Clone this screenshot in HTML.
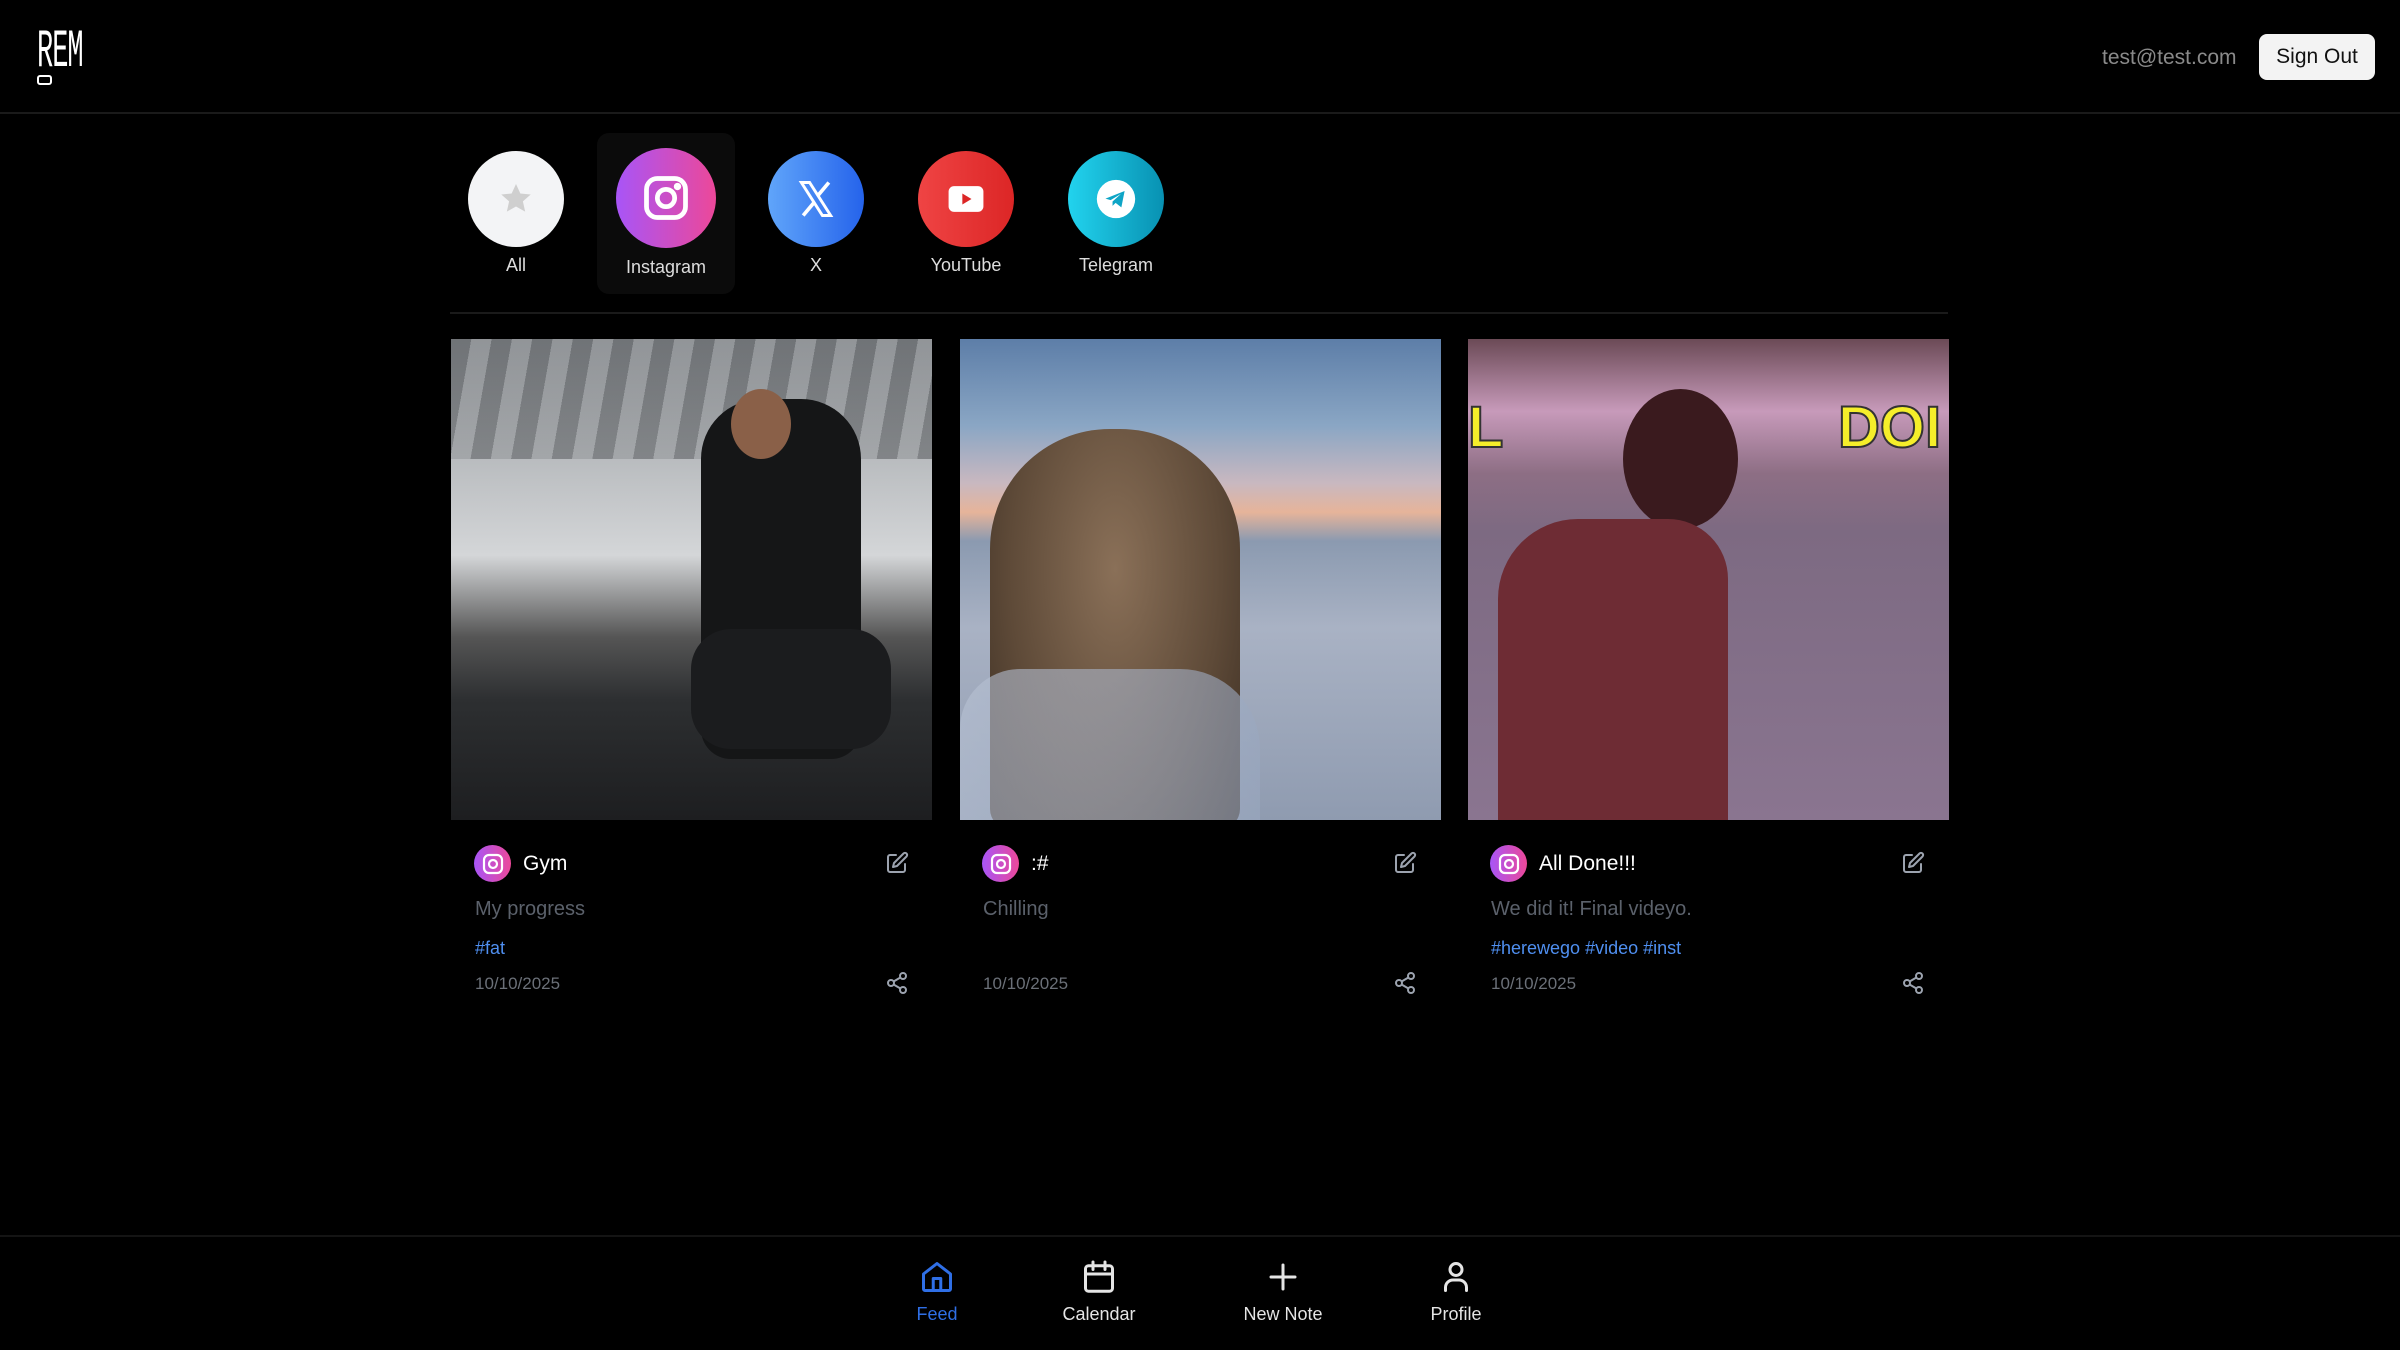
<!DOCTYPE html>
<html><head><meta charset="utf-8"><style>
*{margin:0;padding:0;box-sizing:border-box}
body{width:2400px;height:1350px;background:#000;font-family:"Liberation Sans",sans-serif;color:#fff;position:relative;overflow:hidden}
.abs{position:absolute}
.hdr{left:0;top:0;width:2400px;height:114px;border-bottom:2px solid #1a1a1a}
.circ{width:96px;height:96px;border-radius:50%;display:flex;align-items:center;justify-content:center}
.lbl{font-size:18px;color:#ddd;text-align:center;width:150px}
.card-img{top:339px;width:481px;height:481px;overflow:hidden}
.ttl{font-size:21px;color:#fff}
.desc{font-size:20px;color:#5b616b}
.tag{font-size:18px;color:#4f8ff0}
.date{font-size:17px;color:#6b7078}
.nav{font-size:18px;text-align:center;width:160px}
</style></head><body>
<div class="abs hdr"></div>
<div class="abs" style="left:37px;top:26px;font-family:'Liberation Mono',monospace;font-size:54px;line-height:54px;transform:scaleX(0.5);transform-origin:left;letter-spacing:-2px">REM</div>
<div class="abs" style="left:37px;top:75px;width:15px;height:10px;border:2px solid #fff;border-radius:3px"></div>
<div class="abs" style="left:2102px;top:46px;font-size:21px;color:#8a8a8a">test@test.com</div>
<div class="abs" style="left:2259px;top:34px;width:116px;height:46px;background:#f3f3f3;border-radius:8px;color:#111;font-size:21px;display:flex;align-items:center;justify-content:center">Sign Out</div>

<div class="abs" style="left:597px;top:133px;width:138px;height:161px;background:#0b0b0b;border-radius:12px"></div>
<div class="abs circ" style="left:468px;top:151px;background:#f3f4f6"><svg width="36" height="36" viewBox="0 0 24 24"><path d="M12 2l2.9 6.3 6.9.7-5.2 4.6 1.5 6.8L12 17l-6.1 3.4 1.5-6.8L2.2 9l6.9-.7z" fill="#cfcfcf"/></svg></div>
<div class="abs circ" style="left:616px;top:148px;width:100px;height:100px;background:linear-gradient(90deg,#a855f7,#ec4899)"><svg width="52" height="52" viewBox="0 0 24 24" fill="none" stroke="#fff" stroke-width="2.2"><rect x="3" y="3" width="18" height="18" rx="5"/><circle cx="12" cy="12" r="4"/><circle cx="17.3" cy="6.7" r=".6" fill="#fff"/></svg></div>
<div class="abs circ" style="left:768px;top:151px;background:linear-gradient(90deg,#60a5fa,#2563eb)"><svg width="44" height="44" viewBox="0 0 24 24"><path d="M4 3h4.5l11.5 18h-4.5z" fill="none" stroke="#fff" stroke-width="1.6"/><path d="M19 3l-6.2 7.4M5 21l6.2-7.4" stroke="#fff" stroke-width="2"/></svg></div>
<div class="abs circ" style="left:918px;top:151px;background:linear-gradient(90deg,#ef4444,#dc2626)"><svg width="44" height="44" viewBox="0 0 24 24"><rect x="2.5" y="5" width="19" height="14" rx="3" fill="#fff"/><path d="M10 9l5 3-5 3z" fill="#dc2626"/></svg></div>
<div class="abs circ" style="left:1068px;top:151px;background:linear-gradient(90deg,#22d3ee,#0891b2)"><svg width="46" height="46" viewBox="0 0 24 24"><circle cx="12" cy="12" r="10" fill="#fff"/><path d="M6.5 11.8l10-4-1.7 8.6-3-2.4-1.6 1.6v-2.3l4.4-4-5.4 3.3z" fill="#0ea5c6"/></svg></div>
<div class="abs lbl" style="left:441px;top:255px">All</div>
<div class="abs lbl" style="left:591px;top:257px">Instagram</div>
<div class="abs lbl" style="left:741px;top:255px">X</div>
<div class="abs lbl" style="left:891px;top:255px">YouTube</div>
<div class="abs lbl" style="left:1041px;top:255px">Telegram</div>
<div class="abs" style="left:450px;top:312px;width:1498px;height:2px;background:#1a1a1a"></div>

<div class="abs card-img" style="left:451px;background:linear-gradient(180deg,#7d8186 0%,#b9bcbf 25%,#d4d6d8 45%,#555 62%,#2d2f31 75%,#1d1e20 100%)">
 <div class="abs" style="left:0;top:0;width:481px;height:120px;background:repeating-linear-gradient(100deg,#6a6d70 0 20px,#9a9da0 20px 40px);opacity:.7"></div>
 <div class="abs" style="left:250px;top:60px;width:160px;height:360px;background:#151617;border-radius:60px 60px 30px 30px"></div>
 <div class="abs" style="left:240px;top:290px;width:200px;height:120px;background:#1b1c1e;border-radius:40px"></div>
 <div class="abs" style="left:280px;top:50px;width:60px;height:70px;background:#8a6048;border-radius:50%"></div>
</div>
<div class="abs card-img" style="left:960px;background:linear-gradient(180deg,#5d7ea8 0%,#8aa6c4 18%,#c9b8c0 30%,#e6b49a 36%,#8b9ab0 42%,#a9b2c4 60%,#8f9bb0 100%)">
 <div class="abs" style="left:30px;top:90px;width:250px;height:400px;background:radial-gradient(ellipse at 50% 35%,#8a7058,#5e4a38 60%,#3a2d22);border-radius:120px 120px 20px 20px"></div>
 <div class="abs" style="left:0;top:330px;width:300px;height:160px;background:linear-gradient(90deg,#b8c2d4,#9aa8c0);border-radius:60px 80px 0 0;opacity:.6"></div>
</div>
<div class="abs card-img" style="left:1468px;background:linear-gradient(180deg,#6b4a56 0%,#c79aba 15%,#8d6e84 28%,#7d6a82 40%,#8a7590 100%)">
 <div class="abs" style="left:0;top:55px;font:bold 58px 'Liberation Sans';color:#f5ee2a;-webkit-text-stroke:2px #333">L</div>
 <div class="abs" style="left:370px;top:55px;font:bold 58px 'Liberation Sans';color:#f5ee2a;-webkit-text-stroke:2px #333">DOI</div>
 <div class="abs" style="left:155px;top:50px;width:115px;height:140px;background:#3a1a1e;border-radius:50%"></div>
 <div class="abs" style="left:30px;top:180px;width:230px;height:310px;background:#6e2c34;border-radius:80px 60px 0 0"></div>
</div>

<div class="abs" style="left:474px;top:845px;width:37px;height:37px;border-radius:50%;background:linear-gradient(90deg,#a855f7,#ec4899);display:flex;align-items:center;justify-content:center"><svg width="24" height="24" viewBox="0 0 24 24" fill="none" stroke="#fff" stroke-width="2.2"><rect x="3" y="3" width="18" height="18" rx="5"/><circle cx="12" cy="12" r="4"/></svg></div>
<div class="abs" style="left:982px;top:845px;width:37px;height:37px;border-radius:50%;background:linear-gradient(90deg,#a855f7,#ec4899);display:flex;align-items:center;justify-content:center"><svg width="24" height="24" viewBox="0 0 24 24" fill="none" stroke="#fff" stroke-width="2.2"><rect x="3" y="3" width="18" height="18" rx="5"/><circle cx="12" cy="12" r="4"/></svg></div>
<div class="abs" style="left:1490px;top:845px;width:37px;height:37px;border-radius:50%;background:linear-gradient(90deg,#a855f7,#ec4899);display:flex;align-items:center;justify-content:center"><svg width="24" height="24" viewBox="0 0 24 24" fill="none" stroke="#fff" stroke-width="2.2"><rect x="3" y="3" width="18" height="18" rx="5"/><circle cx="12" cy="12" r="4"/></svg></div>

<div class="abs ttl" style="left:523px;top:852px">Gym</div>
<div class="abs ttl" style="left:1031px;top:852px">:#</div>
<div class="abs ttl" style="left:1539px;top:852px">All Done!!!</div>

<div class="abs desc" style="left:475px;top:898px">My progress</div>
<div class="abs desc" style="left:983px;top:898px">Chilling</div>
<div class="abs desc" style="left:1491px;top:898px">We did it! Final videyo.</div>

<div class="abs tag" style="left:475px;top:938px">#fat</div>
<div class="abs tag" style="left:1491px;top:938px">#herewego #video #inst</div>

<div class="abs date" style="left:475px;top:974px">10/10/2025</div>
<div class="abs date" style="left:983px;top:974px">10/10/2025</div>
<div class="abs date" style="left:1491px;top:974px">10/10/2025</div>

<svg class="abs" style="left:885px;top:851px" width="24" height="24" viewBox="0 0 24 24" fill="none" stroke="#9ca3af" stroke-width="2" stroke-linecap="round" stroke-linejoin="round"><path d="M11 4H5a2 2 0 0 0-2 2v13a2 2 0 0 0 2 2h13a2 2 0 0 0 2-2v-6"/><path d="M18.5 2.5a2.1 2.1 0 0 1 3 3L12 15l-4 1 1-4z"/></svg>
<svg class="abs" style="left:1393px;top:851px" width="24" height="24" viewBox="0 0 24 24" fill="none" stroke="#9ca3af" stroke-width="2" stroke-linecap="round" stroke-linejoin="round"><path d="M11 4H5a2 2 0 0 0-2 2v13a2 2 0 0 0 2 2h13a2 2 0 0 0 2-2v-6"/><path d="M18.5 2.5a2.1 2.1 0 0 1 3 3L12 15l-4 1 1-4z"/></svg>
<svg class="abs" style="left:1901px;top:851px" width="24" height="24" viewBox="0 0 24 24" fill="none" stroke="#9ca3af" stroke-width="2" stroke-linecap="round" stroke-linejoin="round"><path d="M11 4H5a2 2 0 0 0-2 2v13a2 2 0 0 0 2 2h13a2 2 0 0 0 2-2v-6"/><path d="M18.5 2.5a2.1 2.1 0 0 1 3 3L12 15l-4 1 1-4z"/></svg>
<svg class="abs" style="left:885px;top:971px" width="24" height="24" viewBox="0 0 24 24" fill="none" stroke="#9ca3af" stroke-width="2"><circle cx="18" cy="5" r="3"/><circle cx="6" cy="12" r="3"/><circle cx="18" cy="19" r="3"/><path d="M8.6 13.5l6.8 4M15.4 6.5l-6.8 4"/></svg>
<svg class="abs" style="left:1393px;top:971px" width="24" height="24" viewBox="0 0 24 24" fill="none" stroke="#9ca3af" stroke-width="2"><circle cx="18" cy="5" r="3"/><circle cx="6" cy="12" r="3"/><circle cx="18" cy="19" r="3"/><path d="M8.6 13.5l6.8 4M15.4 6.5l-6.8 4"/></svg>
<svg class="abs" style="left:1901px;top:971px" width="24" height="24" viewBox="0 0 24 24" fill="none" stroke="#9ca3af" stroke-width="2"><circle cx="18" cy="5" r="3"/><circle cx="6" cy="12" r="3"/><circle cx="18" cy="19" r="3"/><path d="M8.6 13.5l6.8 4M15.4 6.5l-6.8 4"/></svg>

<div class="abs" style="left:0;top:1235px;width:2400px;height:2px;background:#141414"></div>
<svg class="abs" style="left:919px;top:1259px" width="36" height="36" viewBox="0 0 24 24" fill="none" stroke="#2f6fe6" stroke-width="2" stroke-linejoin="round"><path d="M3 10l9-7 9 7v10a1 1 0 0 1-1 1H4a1 1 0 0 1-1-1z"/><path d="M9.5 21v-8h5v8"/></svg>
<svg class="abs" style="left:1081px;top:1259px" width="36" height="36" viewBox="0 0 24 24" fill="none" stroke="#e5e5e5" stroke-width="2" stroke-linecap="round"><rect x="3" y="4.5" width="18" height="17" rx="2"/><path d="M8 2v5M16 2v5M3 10h18"/></svg>
<svg class="abs" style="left:1265px;top:1259px" width="36" height="36" viewBox="0 0 24 24" fill="none" stroke="#e5e5e5" stroke-width="2" stroke-linecap="round"><path d="M12 4v16M4 12h16"/></svg>
<svg class="abs" style="left:1438px;top:1259px" width="36" height="36" viewBox="0 0 24 24" fill="none" stroke="#e5e5e5" stroke-width="2" stroke-linecap="round"><circle cx="12" cy="7" r="4"/><path d="M5 21v-2a5 5 0 0 1 5-5h4a5 5 0 0 1 5 5v2"/></svg>
<div class="abs nav" style="left:857px;top:1304px;color:#2f6fe6">Feed</div>
<div class="abs nav" style="left:1019px;top:1304px;color:#e5e5e5">Calendar</div>
<div class="abs nav" style="left:1203px;top:1304px;color:#e5e5e5">New Note</div>
<div class="abs nav" style="left:1376px;top:1304px;color:#e5e5e5">Profile</div>
</body></html>
